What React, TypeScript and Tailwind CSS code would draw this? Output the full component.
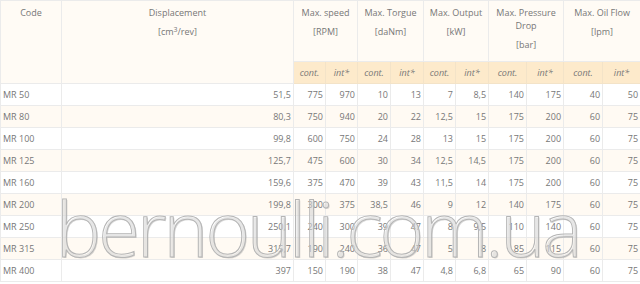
import React from "react";

const rows: string[][] = [
  ["MR 50", "51,5", "775", "970", "10", "13", "7", "8,5", "140", "175", "40", "50"],
  ["MR 80", "80,3", "750", "940", "20", "22", "12,5", "15", "175", "200", "60", "75"],
  ["MR 100", "99,8", "600", "750", "24", "28", "13", "15", "175", "200", "60", "75"],
  ["MR 125", "125,7", "475", "600", "30", "34", "12,5", "14,5", "175", "200", "60", "75"],
  ["MR 160", "159,6", "375", "470", "39", "43", "11,5", "14", "175", "200", "60", "75"],
  ["MR 200", "199,8", "300", "375", "38,5", "46", "9", "12", "140", "175", "60", "75"],
  ["MR 250", "250,1", "240", "300", "39", "47", "8", "9,5", "110", "140", "60", "75"],
  ["MR 315", "315,7", "190", "240", "36", "47", "5", "8", "85", "115", "60", "75"],
  ["MR 400", "397", "150", "190", "38", "47", "4,8", "6,8", "65", "90", "60", "75"],
];

const widths = [61, 232, 32, 32, 33, 33, 32, 33, 38, 37, 39, 38];

const groups: { title: React.ReactNode; unit: string }[] = [
  { title: "Max. speed", unit: "[RPM]" },
  { title: "Max. Torgue", unit: "[daNm]" },
  { title: "Max. Output", unit: "[kW]" },
  { title: <>Max. Pressure<br />Drop</>, unit: "[bar]" },
  { title: "Max. Oil Flow", unit: "[lpm]" },
];

export default function App() {
  return (
    <div
      className="relative w-[640px] h-[284px] overflow-hidden bg-white text-[#777]"
      style={{ fontFamily: '"Open Sans", "Liberation Sans", sans-serif' }}
    >
      <table className="table-fixed border-collapse w-[640px] text-[9px]">
        <colgroup>
          {widths.map((w, i) => (
            <col key={i} style={{ width: w }} />
          ))}
        </colgroup>
        <thead>
          <tr className="h-[61px]">
            <th rowSpan={2} className="bg-[#fffbf5] border border-[#ebebeb] align-top font-normal pt-[5px] leading-[13px]">
              Code
            </th>
            <th rowSpan={2} className="bg-[#fffbf5] border border-[#ebebeb] align-top font-normal pt-[5px] leading-[13px]">
              <div>Displacement</div>
              <div className="mt-[6px]">
                [cm<sup className="text-[7px]">3</sup>/rev]
              </div>
            </th>
            {groups.map((g, i) => (
              <th
                key={i}
                colSpan={2}
                className="bg-[#fffbf5] border border-[#ebebeb] align-top font-normal pt-[5px] leading-[13px]"
              >
                <div>{g.title}</div>
                <div className="mt-[6px]">{g.unit}</div>
              </th>
            ))}
          </tr>
          <tr className="h-[22px]">
            {groups.map((_, i) => (
              <React.Fragment key={i}>
                <th className="bg-[#fdeacb] border border-[#f3e3c8] font-normal italic">cont.</th>
                <th className="bg-[#fdeacb] border border-[#f3e3c8] font-normal italic">int*</th>
              </React.Fragment>
            ))}
          </tr>
        </thead>
        <tbody>
          {rows.map((r, ri) => (
            <tr key={ri} className={`h-[22px] ${ri % 2 === 1 ? "bg-[#fffaf3]" : "bg-white"}`}>
              {r.map((c, ci) => (
                <td
                  key={ci}
                  className={`border border-[#ebebeb] whitespace-nowrap ${
                    ci === 0 ? "text-left pl-[2px]" : "text-right pr-[2px]"
                  }`}
                >
                  {c}
                </td>
              ))}
            </tr>
          ))}
        </tbody>
      </table>
      <div
        className="absolute left-[56px] top-[190px] text-[76px] leading-none font-light tracking-[-3px] whitespace-nowrap pointer-events-none"
        style={{
          color: "rgba(255,255,255,0.35)",
          WebkitTextStroke: "1px #b5b5b5",
          textShadow: "1px 1px 0 rgba(160,160,160,0.4)",
        }}
      >
        bernoulli.com.ua
      </div>
    </div>
  );
}
